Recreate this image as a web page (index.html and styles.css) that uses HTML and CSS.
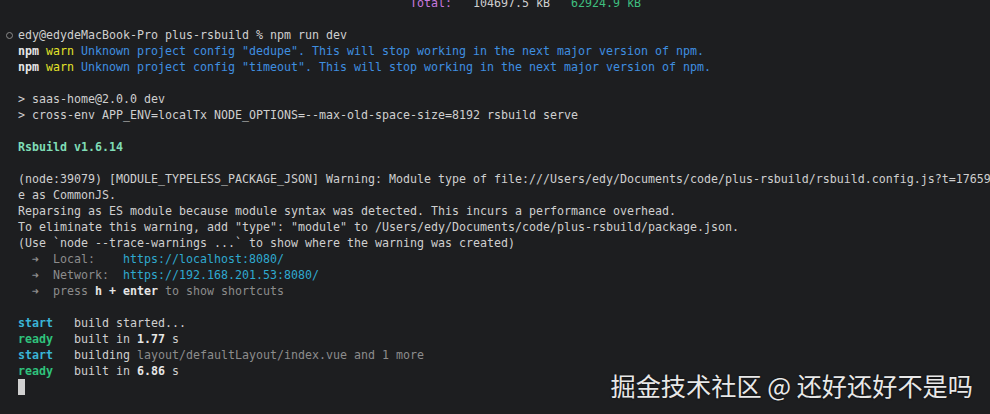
FILE: index.html
```html
<!DOCTYPE html>
<html lang="zh-CN">
<head>
<meta charset="utf-8">
<title>Terminal</title>
<link rel="stylesheet" href="styles.css">
</head>
<body>
<div class="term">
<div class="ln">                                                        <span class="mag">Total:</span>   104697.5 kB   <span class="grn">62924.9 kB</span></div>
<div class="ln"> </div>
<div class="ln"><span class="prompt"></span>edy@edydeMacBook-Pro plus-rsbuild % npm run dev</div>
<div class="ln"><b class="wb">npm</b> <span class="yel">warn</span> <span class="blu">Unknown project config "dedupe". This will stop working in the next major version of npm.</span></div>
<div class="ln"><b class="wb">npm</b> <span class="yel">warn</span> <span class="blu">Unknown project config "timeout". This will stop working in the next major version of npm.</span></div>
<div class="ln"> </div>
<div class="ln">&gt; saas-home@2.0.0 dev</div>
<div class="ln">&gt; cross-env APP_ENV=localTx NODE_OPTIONS=--max-old-space-size=8192 rsbuild serve</div>
<div class="ln"> </div>
<div class="ln"><b class="rs">Rsbuild v1.6.14</b></div>
<div class="ln"> </div>
<div class="ln">(node:39079) [MODULE_TYPELESS_PACKAGE_JSON] Warning: Module type of file:///Users/edy/Documents/code/plus-rsbuild/rsbuild.config.js?t=1765972431 is not specified and it doesn't parse as ES module</div>
<div class="ln">e as CommonJS.</div>
<div class="ln">Reparsing as ES module because module syntax was detected. This incurs a performance overhead.</div>
<div class="ln">To eliminate this warning, add "type": "module" to /Users/edy/Documents/code/plus-rsbuild/package.json.</div>
<div class="ln">(Use `node --trace-warnings ...` to show where the warning was created)</div>
<div class="ln">  <span class="dim">➜</span>  <span class="dim">Local:</span>    <span class="cyn">https://localhost:8080/</span></div>
<div class="ln">  <span class="dim">➜</span>  <span class="dim">Network:</span>  <span class="cyn">https://192.168.201.53:8080/</span></div>
<div class="ln">  <span class="dim">➜</span>  <span class="dim">press</span> <b class="wb">h + enter</b> <span class="dim">to show shortcuts</span></div>
<div class="ln"> </div>
<div class="ln"><b class="start">start</b>   build started...</div>
<div class="ln"><b class="ready">ready</b>   built in <b class="wb">1.77</b> s</div>
<div class="ln"><b class="start">start</b>   building <span class="dim">layout/defaultLayout/index.vue and 1 more</span></div>
<div class="ln"><b class="ready">ready</b>   built in <b class="wb">6.86</b> s</div>
<div class="ln"><span class="cursor"></span></div>
</div>
<div class="watermark">掘金技术社区 @ 还好还好不是吗</div>
</body>
</html>
```
FILE: styles.css
```css
html, body {
  margin: 0;
  padding: 0;
  background: #1d1e20;
  width: 990px;
  height: 414px;
  overflow: hidden;
}
body {
  position: relative;
}
.term {
  margin-top: -5px;
  font-family: "DejaVu Sans Mono", "Liberation Mono", monospace;
  font-size: 11.63px;
  color: #cfcfcf;
}
.ln {
  height: 16px;
  line-height: 16px;
  padding-left: 18px;
  white-space: pre;
  overflow: hidden;
}
b { font-weight: bold; }
.wb { color: #e6e6e6; }
.mag { color: #c678dd; }
.grn { color: #3fbf7f; }
.yel { color: #e3e32a; }
.blu { color: #3f8fe0; }
.rs { color: #7fdcb6; }
.dim { color: #8c8c8c; }
.cyn { color: #2fa9cf; }
.start { color: #3ab4d6; }
.ready { color: #2fc27c; }
.prompt {
  display: inline-block;
  width: 5px;
  height: 5px;
  border: 1px solid #8a8a8a;
  border-radius: 50%;
  margin-left: -12px;
  margin-right: 5px;
  vertical-align: 0;
}
.cursor {
  display: inline-block;
  width: 7px;
  height: 16px;
  background: #d0d0d0;
  vertical-align: top;
}
.watermark {
  position: absolute;
  right: 17px;
  top: 368px;
  font-family: "Noto Sans CJK SC", sans-serif;
  font-size: 25.2px;
  line-height: 34px;
  color: #e8e8e8;
  text-shadow: 0 0 2px rgba(0,0,0,0.8);
  white-space: nowrap;
}
```
